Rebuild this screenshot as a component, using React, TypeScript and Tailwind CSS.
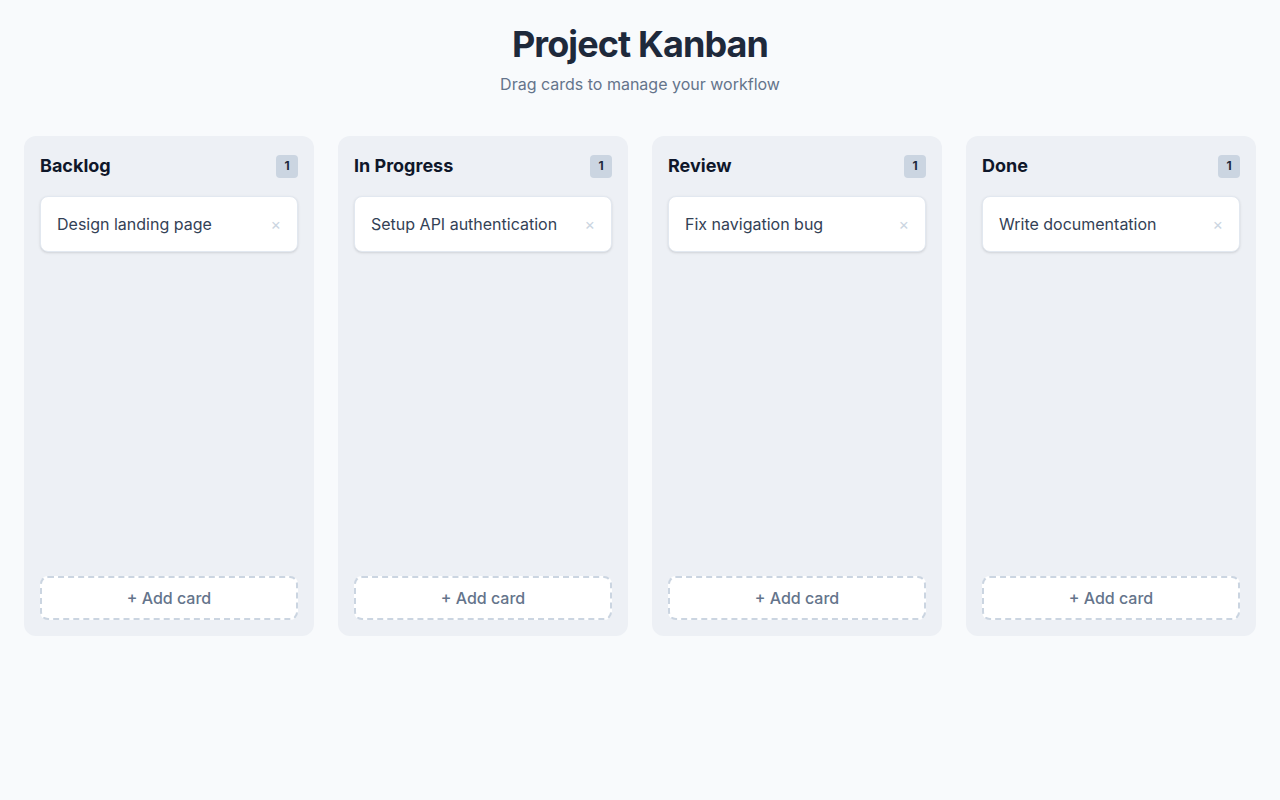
import { useState } from 'react';

type Card = { id: number; title: string };
type Column = { id: string; title: string; cards: Card[] };

const initialColumns: Column[] = [
  { id: 'backlog', title: 'Backlog', cards: [{ id: 1, title: 'Design landing page' }] },
  { id: 'progress', title: 'In Progress', cards: [{ id: 2, title: 'Setup API authentication' }] },
  { id: 'review', title: 'Review', cards: [{ id: 3, title: 'Fix navigation bug' }] },
  { id: 'done', title: 'Done', cards: [{ id: 4, title: 'Write documentation' }] },
];

export default function App() {
  const [columns, setColumns] = useState(initialColumns);

  const removeCard = (colId: string, cardId: number) => {
    setColumns((cols) =>
      cols.map((c) => (c.id === colId ? { ...c, cards: c.cards.filter((k) => k.id !== cardId) } : c))
    );
  };

  const addCard = (colId: string) => {
    setColumns((cols) =>
      cols.map((c) =>
        c.id === colId ? { ...c, cards: [...c.cards, { id: Date.now(), title: 'New card' }] } : c
      )
    );
  };

  return (
    <div className="min-h-screen bg-[#f8fafc] px-6 pt-6 font-['Inter',sans-serif]">
      <div className="mb-10 text-center">
        <h1 className="text-4xl font-bold tracking-tight text-[#1e293b]">Project Kanban</h1>
        <p className="mt-2 text-base text-[#64748b]">Drag cards to manage your workflow</p>
      </div>

      <div className="grid grid-cols-4 gap-6">
        {columns.map((col) => (
          <div key={col.id} className="flex h-[500px] flex-col rounded-xl bg-[#edf0f5] p-4">
            <div className="mb-4 flex h-7 items-center justify-between">
              <h2 className="text-lg font-bold text-[#0f172a]">{col.title}</h2>
              <span className="flex h-[23px] min-w-[22px] items-center justify-center rounded bg-[#cbd5e1] px-1.5 text-xs font-bold text-[#1e293b]">
                {col.cards.length}
              </span>
            </div>

            <div className="flex flex-1 flex-col gap-3">
              {col.cards.map((card) => (
                <div
                  key={card.id}
                  className="flex items-center justify-between rounded-lg border border-[#e2e8f0] bg-white px-4 py-[15px] shadow-sm"
                >
                  <span className="text-base leading-6 text-[#334155]">{card.title}</span>
                  <button
                    onClick={() => removeCard(col.id, card.id)}
                    className="text-base leading-none text-[#cbd5e1]"
                  >
                    ×
                  </button>
                </div>
              ))}
            </div>

            <button
              onClick={() => addCard(col.id)}
              className="w-full rounded-lg border-2 border-dashed border-[#cbd5e1] bg-white py-2 text-base font-medium text-[#64748b]"
            >
              + Add card
            </button>
          </div>
        ))}
      </div>
    </div>
  );
}
